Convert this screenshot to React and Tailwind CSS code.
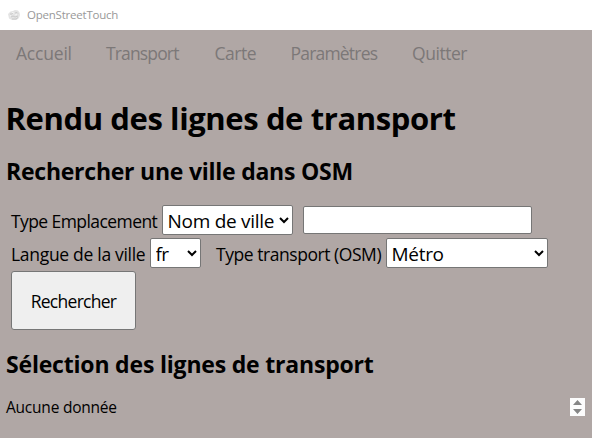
function TitleIcon() {
  return (
    <svg width="14" height="12" viewBox="0 0 14 12" aria-hidden="true">
      <path d="M1 5 3.500 2.500 6 2l2-1 3 .5 1.500 2L13 6l-1 3-2.500 2H5L2 9.500Z" fill="#e4e4e4" />
      <path d="M3 5h2l1-1M8 4l2-.5 1 1M4 8l2-1 2 1 3-1M5 10h4l2-1.500" fill="none" stroke="#c6c6c6" strokeWidth="0.9" />
      <path d="M5 3.500l2 .5M8 6l2-.5M3 7l1-.5" fill="none" stroke="#fafafa" strokeWidth="0.8" />
    </svg>
  );
}

function Select({ children, className }) {
  return (
    <select
      className={`h-[30px] shrink-0 rounded-[2px] border border-[#767676] bg-white px-0 pl-[0.5px] pt-px text-[19px] leading-[28px] text-black ${className}`}
    >
      <option>{children}</option>
    </select>
  );
}

export default function App() {
  return (
    <div className="flex h-[438px] w-[592px] flex-col overflow-hidden whitespace-nowrap bg-[#b0a7a5] font-['Open_Sans','Noto_Sans',sans-serif] text-black">
      <header className="flex h-[30px] items-center bg-white pl-[7px] text-[11.5px] tracking-[-0.22px] text-[#999999]">
        <TitleIcon />
        <span className="ml-[6px] leading-[30px]">OpenStreetTouch</span>
      </header>
      <nav className="flex h-[47px] items-center pl-4 text-[17.5px] leading-[47px] text-[#7c7878]">
        <span className="w-[90px] tracking-[-0.2px]">Accueil</span>
        <span className="w-[108.5px] tracking-[-0.85px]">Transport</span>
        <span className="w-[76px] tracking-[-0.45px]">Carte</span>
        <span className="w-[121.5px] tracking-[-0.8px]">Paramètres</span>
        <span className="tracking-[-0.45px]">Quitter</span>
      </nav>
      <main className="flex flex-col pl-[6px]">
        <h1 className="mt-[21px] text-[31px] font-bold leading-[40px] tracking-[-0.4px] -ml-[0.5px]">
          Rendu des lignes de transport
        </h1>
        <h2 className="mt-[17px] text-[23px] font-bold leading-[32px] tracking-[-0.24px]">
          Rechercher une ville dans OSM
        </h2>
        <form className="mt-[18px] flex flex-col gap-[3px] pl-[5px] text-[17.5px]">
          <div className="flex h-[30px] items-center">
            <label className="w-[151px] pt-px leading-[30px] tracking-[-0.58px]">Type Emplacement</label>
            <Select className="w-[131px] tracking-[-0.28px]">Nom de ville</Select>
            <input className="ml-[10px] h-[28px] w-[229px] rounded-[2px] border border-[#767676] bg-white" />
          </div>
          <div className="flex h-[30px] items-center">
            <label className="w-[139px] pt-px leading-[30px] tracking-[-0.3px]">Langue de la ville</label>
            <Select className="w-[51px] tracking-[-0.7px]">fr</Select>
            <label className="ml-[15px] w-[170px] pt-px leading-[30px] tracking-[-0.45px]">Type transport (OSM)</label>
            <Select className="w-[162px] tracking-[-0.3px]">Métro</Select>
          </div>
          <button
            type="button"
            className="h-[59px] w-[125px] rounded-[3px] border border-[#767676] bg-[#efefef] pt-px leading-[54px] tracking-[-0.72px]"
          >
            Rechercher
          </button>
        </form>
        <h2 className="mt-[18px] text-[23px] font-bold leading-[32px] tracking-[-0.19px]">
          Sélection des lignes de transport
        </h2>
        <div className="mt-[18px] flex h-[18px] items-center justify-between pr-[7px]">
          <span className="text-[15.5px] leading-[18px] tracking-[-0.22px]">Aucune donnée</span>
          <svg width="15" height="18" viewBox="0 0 15 18" className="bg-[#fcfcfc]" aria-hidden="true">
            <path d="M3 7h9L7.500 2ZM3 11h9l-4.500 5Z" fill="#858585" />
          </svg>
        </div>
      </main>
    </div>
  );
}
